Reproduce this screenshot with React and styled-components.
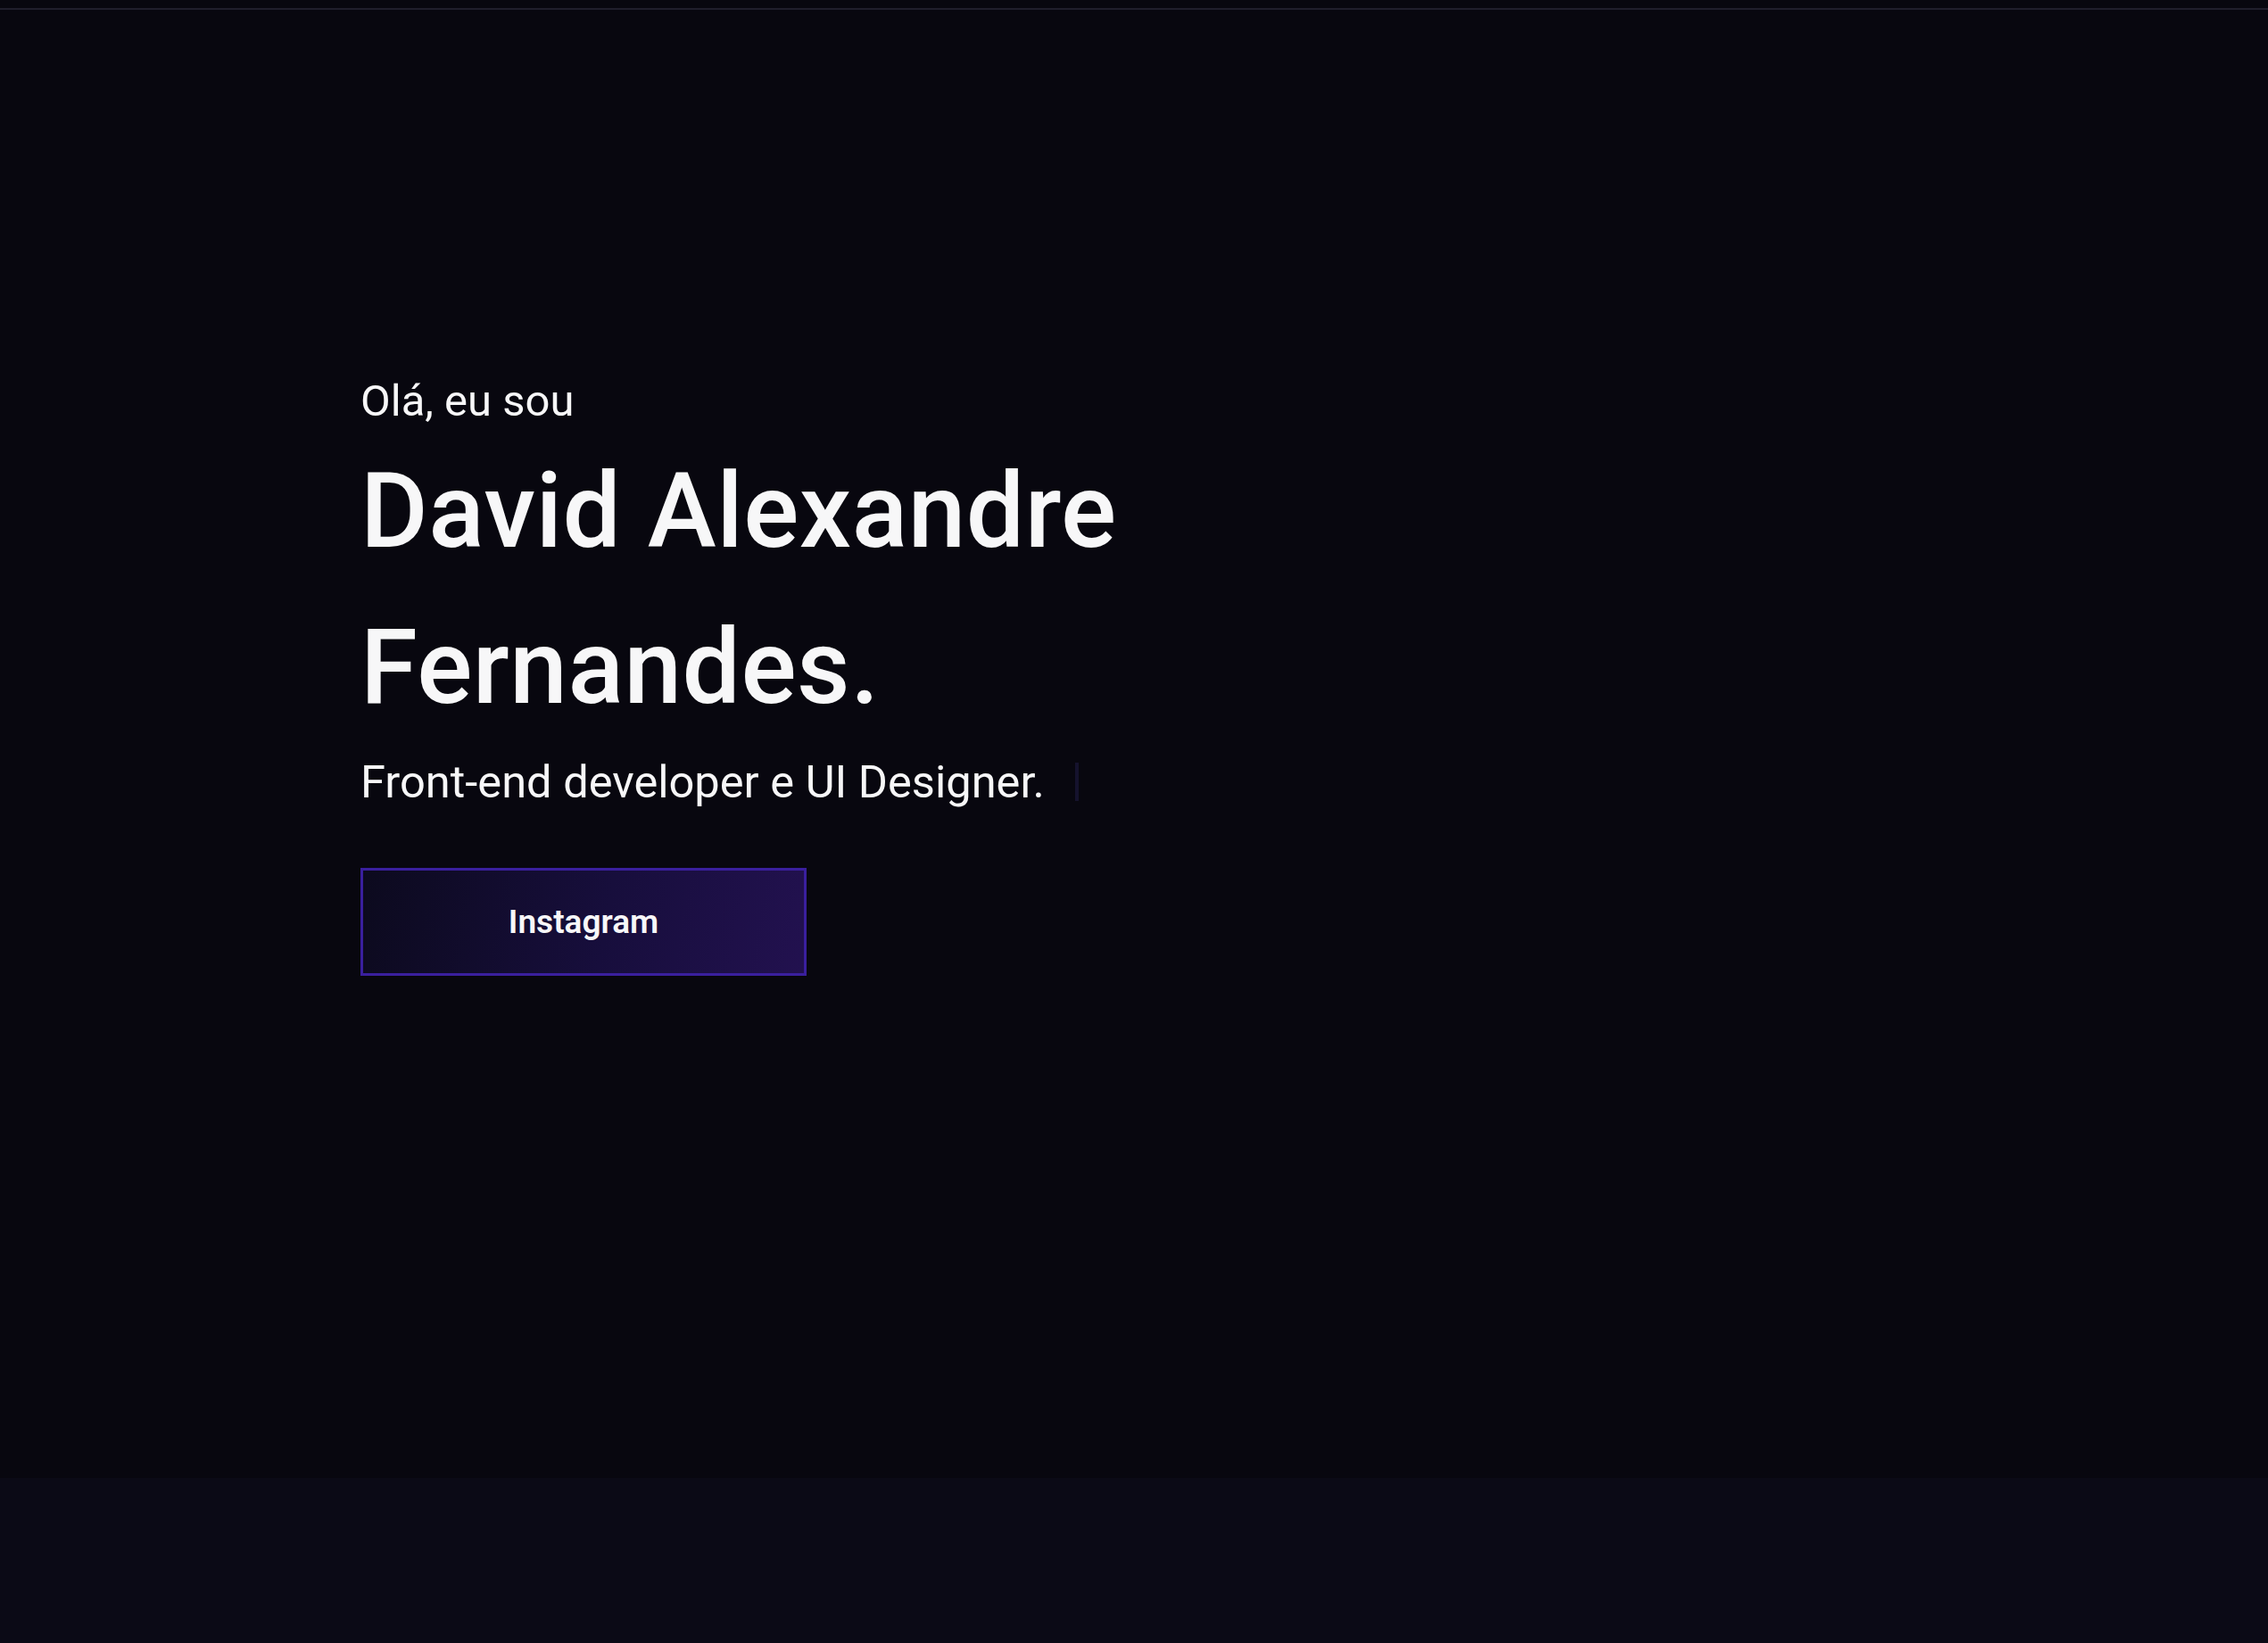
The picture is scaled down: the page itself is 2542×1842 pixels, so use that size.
import React from 'react';
import styled, { createGlobalStyle } from 'styled-components';

const GlobalStyle = createGlobalStyle`
    * {
        box-sizing: border-box;
    }
    body {
        margin: 0;
        background-color: #08070f;
        font-family: Roboto, "Liberation Sans", sans-serif;
        color: #f7f7f8;
    }
`;

const Page = styled.div`
    width: 100%;
    min-height: 100vh;
    display: flex;
    flex-direction: column;
`;

const Header = styled.header`
    height: 11px;
    border-bottom: 2px solid #201e2c;
    background-color: #08070f;
`;

const Hero = styled.section`
    height: 1646px;
    padding: 410px 0 0 404px;
    display: flex;
    flex-direction: column;
    align-items: flex-start;
    background-color: #08070f;
`;

const Greeting = styled.p`
    margin: 0;
    font-size: 49px;
    font-weight: 400;
`;

const Name = styled.h1`
    margin: 8px 0 0;
    font-size: 116px;
    font-weight: 500;
    line-height: 175px;
    letter-spacing: 0.5px;
`;

const Role = styled.p`
    margin: 11px 0 0;
    font-size: 50.6px;
    font-weight: 400;
    display: flex;
    align-items: center;
`;

const Cursor = styled.span`
    display: inline-block;
    width: 4px;
    height: 43px;
    margin-left: 34px;
    background-color: #15122d;
`;

const Button = styled.a`
    margin-top: 67px;
    width: 500px;
    height: 121px;
    display: flex;
    align-items: center;
    justify-content: center;
    border: 3px solid #3a1f9e;
    background: linear-gradient(100deg, #0c0a1e 0%, #170e3c 55%, #22114f 100%);
    color: #f7f7f8;
    font-size: 37px;
    font-weight: 600;
    text-decoration: none;
    cursor: pointer;
`;

const NextSection = styled.section`
    flex: 1;
    min-height: 185px;
    background-color: #0b0a16;
`;

export default function App() {
  return (
    <Page>
      <GlobalStyle />
      <Header />
      <Hero>
        <Greeting>Olá, eu sou</Greeting>
        <Name>
          David Alexandre
          <br />
          Fernandes.
        </Name>
        <Role>
          Front-end developer e UI Designer.
          <Cursor />
        </Role>
        <Button>Instagram</Button>
      </Hero>
      <NextSection />
    </Page>
  );
}
